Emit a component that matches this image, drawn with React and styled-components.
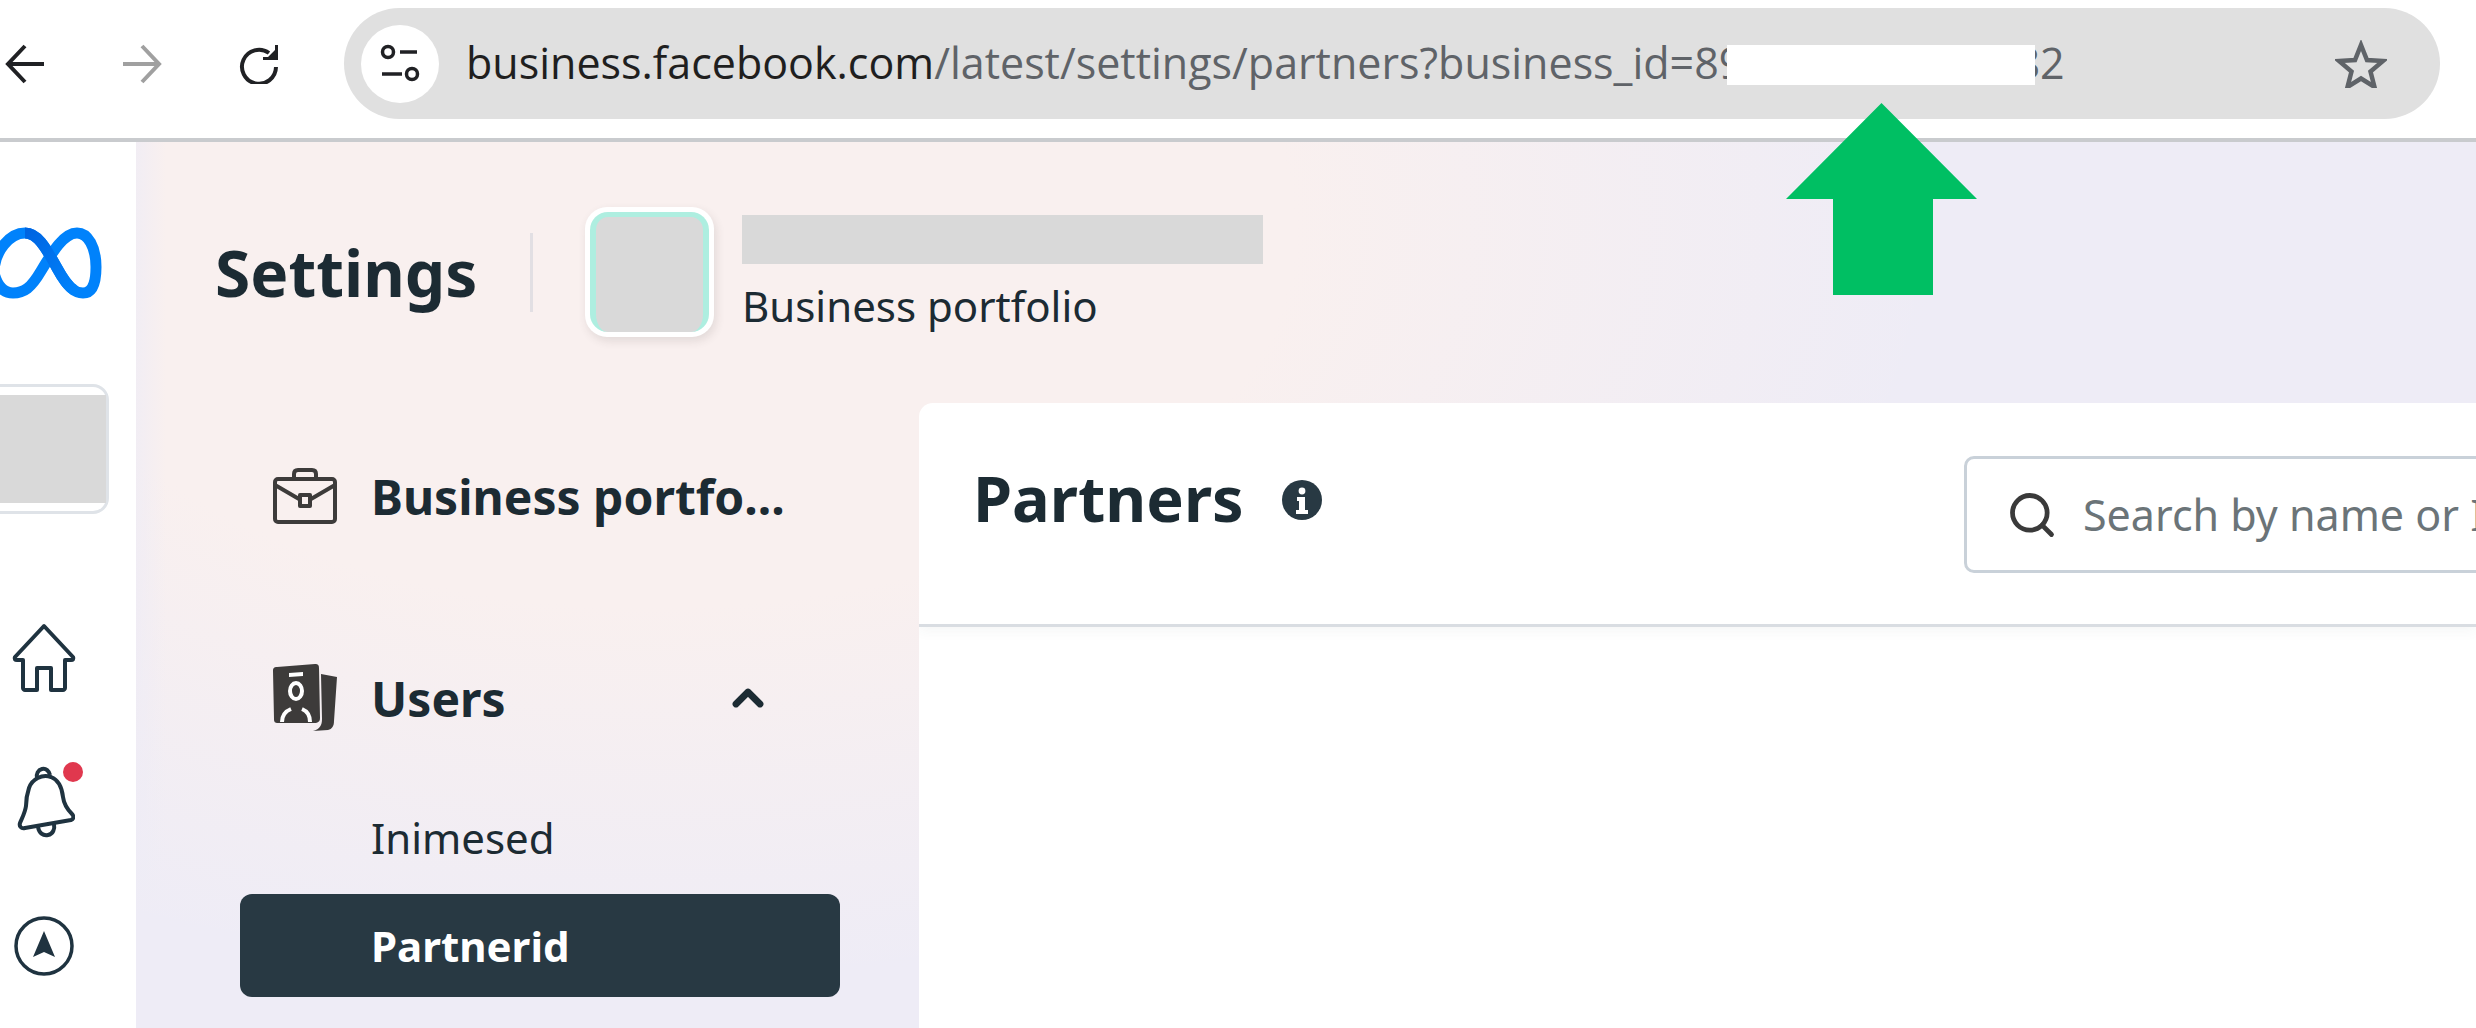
import React from "react";
import styled, { createGlobalStyle } from "styled-components";
import { ChevronUp, Search } from "lucide-react";

const GlobalStyle = createGlobalStyle`
  html, body {
    margin: 0;
    padding: 0;
    background: #fff;
  }
`;

const App = () => {
  return (
    <Page>
      <GlobalStyle />
      <Toolbar>
        <NavIcons>
          <svg width="40" height="40" viewBox="0 0 40 40" fill="none" stroke="#202124" strokeWidth="4">
            <path d="M39 20H4M20 2L3 20l17 18" />
          </svg>
          <svg width="40" height="40" viewBox="0 0 40 40" fill="none" stroke="#a0a0a0" strokeWidth="4">
            <path d="M1 20h35M20 2l17 18-17 18" />
          </svg>
          <svg width="40" height="40" viewBox="0 0 40 40" fill="none" stroke="#202124" strokeWidth="4">
            <path d="M30 9A17 17 0 1 0 37 23" />
            <path d="M39 1v15H24v-3h5L36 6V1z" fill="#202124" stroke="none" />
          </svg>
        </NavIcons>
        <Address>
          <SiteBadge>
            <svg width="42" height="40" viewBox="0 0 42 40" fill="none" stroke="#202124" strokeWidth="3.5">
              <circle cx="9" cy="8" r="5.5" />
              <path d="M21 8h17M3 30h20" />
              <circle cx="33" cy="30" r="5.5" />
            </svg>
          </SiteBadge>
          <Url>
            <strong>business.facebook.com</strong>/latest/settings/partners?business_id=89
            <UrlMask />
            82
          </Url>
          <StarSlot>
            <svg width="52" height="48" viewBox="0 0 52 48" fill="none" stroke="#5f6368" strokeWidth="4.5" strokeLinejoin="miter">
              <path d="M26 5l6 15 16 1-12.500 10.500L39.500 47 26 38.500 12.500 47l4-15.500L4 21l16-1z" />
            </svg>
          </StarSlot>
        </Address>
      </Toolbar>

      <Body>
        <Rail>
          <MetaLogo width="102" height="72" viewBox="0 0 102 72" fill="none" strokeWidth="11">
            <defs>
              <linearGradient id="metaA" x1="0" y1="0" x2="1" y2="1">
                <stop offset="0" stopColor="#0064e1" />
                <stop offset="1" stopColor="#0082fb" />
              </linearGradient>
            </defs>
            <path d="M-6 46C-6 24 10 6 25 6c12 0 20 13 32 35 11 20 18 25 26 25 10 0 13-11 13-26C96 20 88 6 77 6 64 6 53 24 41 44 31 61 24 66 13 66 3 66-3 58-6 46" stroke="#0082fb" />
            <path d="M25 6c12 0 20 13 32 35 7 13 12 19 17 22" stroke="url(#metaA)" />
          </MetaLogo>
          <ProfileBox>
            <ProfileFill />
          </ProfileBox>
          <RailSlot>
            <svg width="66" height="70" viewBox="0 0 66 70" fill="none" stroke="#1f3340" strokeWidth="4" strokeLinejoin="round">
              <path d="M33 3L4 34c-1 2 0 3 2 3h6v28c0 1 1 2 2 2h12V45h14v22h12c1 0 2-1 2-2V37h6c2 0 3-1 2-3z" />
            </svg>
          </RailSlot>
          <RailSlot>
            <BellWrap>
              <svg width="62" height="72" viewBox="0 0 62 72" fill="none" stroke="#1f3340" strokeWidth="4" strokeLinejoin="round">
                <path d="M24 12c-1-4 1-8 5-9s7 2 8 6" />
                <path d="M16 22c3-9 13-14 22-11 8 3 11 11 12 20 1 8 5 13 9 17 2 2 2 5-1 6L12 62c-4 1-6-2-5-5 2-5 5-10 6-17 0-6 1-12 3-18z" />
                <path d="M25 61c1 6 5 9 10 8s7-6 6-11" />
              </svg>
              <AlertDot />
            </BellWrap>
          </RailSlot>
          <RailSlot>
            <svg width="60" height="60" viewBox="0 0 60 60">
              <circle cx="30" cy="30" r="28" fill="none" stroke="#1f3340" strokeWidth="3.5" />
              <path d="M30 15L41 41 30 36 19 41z" fill="#1f3340" />
            </svg>
          </RailSlot>
        </Rail>

        <Content>
          <TopStrip>
            <PageTitle>Settings</PageTitle>
            <TitleDivider />
            <Avatar>
              <AvatarInner />
            </Avatar>
            <Portfolio>
              <NameMask />
              <PortfolioLabel>Business portfolio</PortfolioLabel>
            </Portfolio>
          </TopStrip>

          <Columns>
            <Sidebar>
              <NavRow>
                <NavIcon>
                  <svg width="64" height="56" viewBox="0 0 64 56" fill="none" stroke="#3d3b3a" strokeWidth="4" strokeLinejoin="round">
                    <path d="M21 11V6c0-2 1-4 4-4h14c3 0 4 2 4 4v5" />
                    <rect x="2" y="11" width="60" height="43" rx="3" />
                    <path d="M2 17l24 14M62 17L38 31" />
                    <rect x="27" y="27" width="10" height="11" />
                  </svg>
                </NavIcon>
                <NavLabel>Business portfo...</NavLabel>
              </NavRow>
              <NavRow $gap>
                <NavIcon>
                  <svg width="66" height="68" viewBox="0 0 66 68">
                    <path d="M48 10l16 3-3 44c0 5-2 8-6 9l-15 1c7-2 9-6 9-12z" fill="#3d3b3a" />
                    <path d="M4 3l38-3c3 0 4 1 4 4l1 50c0 3-1 4-4 5H5c-3 0-4-1-4-4L0 7c0-3 1-4 4-4z" fill="#3d3b3a" />
                    <path d="M16 9l14-1v4l-14 1z" fill="#fff" />
                    <ellipse cx="23" cy="27" rx="6" ry="8" fill="none" stroke="#fff" strokeWidth="4" />
                    <path d="M9 58c0-7 4-11 9-13M37 58c0-7-3-11-8-13" fill="none" stroke="#fff" strokeWidth="4" />
                  </svg>
                </NavIcon>
                <NavLabel>Users</NavLabel>
                <Chevron>
                  <ChevronUp size={48} strokeWidth={3.4} color="#1c2b33" />
                </Chevron>
              </NavRow>
              <SubList>
                <SubItem>Inimesed</SubItem>
                <SubItem $active>Partnerid</SubItem>
              </SubList>
            </Sidebar>

            <Card>
              <CardHeader>
                <CardTitle>
                  Partners
                  <svg width="40" height="40" viewBox="0 0 40 40">
                    <circle cx="20" cy="20" r="20" fill="#283943" />
                    <circle cx="20" cy="11" r="3.4" fill="#fff" />
                    <path d="M15 17h8v13h3v4H14v-4h3v-9h-2z" fill="#fff" />
                  </svg>
                </CardTitle>
                <SearchBox>
                  <Search size={52} strokeWidth={2.2} color="#3a3a3a" />
                  <SearchText>Search by name or ID</SearchText>
                </SearchBox>
              </CardHeader>
            </Card>
          </Columns>
        </Content>
      </Body>

      <CalloutArrow width="191" height="192" viewBox="0 0 191 192">
        <path d="M95.5 0L191 96h-44v96H47V96H0z" fill="#00bf63" />
      </CalloutArrow>
    </Page>
  );
};

export default App;

const Page = styled.div`
  position: relative;
  width: 2476px;
  height: 1028px;
  overflow: hidden;
  display: flex;
  flex-direction: column;
  background: #fff;
  font-family: "Open Sans", "Liberation Sans", sans-serif;
  color: #1c2b33;
`;

const Toolbar = styled.header`
  height: 142px;
  flex: none;
  box-sizing: border-box;
  display: flex;
  align-items: flex-start;
  padding: 8px 36px 0 5px;
  border-bottom: 4px solid #c9cbce;
  background: #fff;
`;

const NavIcons = styled.div`
  display: flex;
  align-items: center;
  gap: 77px;
  height: 111px;
  width: 339px;
  svg {
    flex: none;
  }
`;

const Address = styled.div`
  flex: 1;
  height: 111px;
  display: flex;
  align-items: center;
  padding: 0 53px 0 17px;
  border-radius: 56px;
  background: #e0e0e0;
`;

const SiteBadge = styled.div`
  width: 78px;
  height: 78px;
  flex: none;
  display: flex;
  align-items: center;
  justify-content: center;
  border-radius: 50%;
  background: #fff;
`;

const Url = styled.div`
  margin: -2px 0 0 27px;
  display: flex;
  align-items: center;
  font-family: "Open Sans", sans-serif;
  font-size: 43px;
  color: #5f6368;
  white-space: pre;
  strong {
    font-weight: 400;
    color: #1f1f1f;
  }
`;

const UrlMask = styled.span`
  display: inline-block;
  width: 308px;
  height: 40px;
  margin: 4px -20px 0 -16px;
  background: #fff;
  position: relative;
`;

const StarSlot = styled.div`
  margin-left: auto;
  display: flex;
`;

const Body = styled.div`
  flex: 1;
  min-height: 0;
  display: flex;
`;

const Rail = styled.nav`
  width: 136px;
  flex: none;
  display: flex;
  flex-direction: column;
  align-items: flex-start;
  overflow: hidden;
  background: #fff;
`;

const MetaLogo = styled.svg`
  margin-top: 85px;
  flex: none;
`;

const ProfileBox = styled.div`
  width: 150px;
  height: 130px;
  margin: 85px 0 0 -41px;
  flex: none;
  box-sizing: border-box;
  padding: 8px 0 8px 0;
  border: 3px solid #dfe3e8;
  border-radius: 16px;
  background: #fff;
`;

const ProfileFill = styled.div`
  height: 100%;
  background: #d9d9d9;
`;

const RailSlot = styled.div`
  width: 88px;
  height: 144px;
  flex: none;
  display: flex;
  align-items: center;
  justify-content: center;
  ${ProfileBox} + & {
    margin-top: 72px;
  }
`;

const BellWrap = styled.div`
  position: relative;
  display: flex;
`;

const AlertDot = styled.span`
  position: absolute;
  top: -4px;
  right: -8px;
  width: 20px;
  height: 20px;
  border-radius: 50%;
  background: #e0384e;
`;

const Content = styled.div`
  flex: 1;
  min-width: 0;
  display: flex;
  flex-direction: column;
  background:
    linear-gradient(90deg, rgba(238, 236, 246, 0.7) 0, rgba(238, 236, 246, 0) 30px),
    radial-gradient(ellipse 55% 85% at 22% 10%, #f9f0ef 0%, #f9f0ef 50%, rgba(249, 240, 239, 0) 100%),
    #eeecf6;
`;

const TopStrip = styled.div`
  height: 261px;
  flex: none;
  box-sizing: border-box;
  display: flex;
  align-items: center;
  padding: 0 0 1px 79px;
`;

const PageTitle = styled.h1`
  margin: 0;
  width: 315px;
  flex: none;
  font-family: "Noto Sans", sans-serif;
  font-size: 64px;
  font-weight: 700;
  color: #1c2b33;
`;

const TitleDivider = styled.div`
  width: 3px;
  height: 79px;
  flex: none;
  background: #e2dfe3;
`;

const Avatar = styled.div`
  width: 129px;
  height: 130px;
  margin-left: 52px;
  flex: none;
  box-sizing: border-box;
  padding: 5px;
  border-radius: 22px;
  background: #fff;
  box-shadow: 2px 4px 10px rgba(60, 50, 50, 0.12);
`;

const AvatarInner = styled.div`
  height: 100%;
  box-sizing: border-box;
  border-radius: 18px;
  border: solid #aeeee0;
  border-width: 5px 6px 0;
  background: #d9d9d9;
`;

const Portfolio = styled.div`
  margin: 5px 0 0 28px;
  display: flex;
  flex-direction: column;
`;

const NameMask = styled.div`
  width: 521px;
  height: 49px;
  background: #d9d9d9;
`;

const PortfolioLabel = styled.div`
  margin-top: 14px;
  font-family: "Noto Sans", sans-serif;
  font-size: 42px;
  line-height: 56px;
  color: #1c2b33;
`;

const Columns = styled.div`
  flex: 1;
  min-height: 0;
  display: flex;
`;

const Sidebar = styled.aside`
  width: 783px;
  flex: none;
  box-sizing: border-box;
  padding: 42px 79px 0 104px;
`;

const NavRow = styled.div`
  height: 102px;
  margin-top: ${(p) => (p.$gap ? "100px" : "0")};
  display: flex;
  align-items: center;
  padding-left: 33px;
`;

const NavIcon = styled.span`
  width: 98px;
  flex: none;
  display: flex;
`;

const NavLabel = styled.span`
  font-family: "Noto Sans", sans-serif;
  font-size: 48px;
  font-weight: 700;
  white-space: nowrap;
  color: #1c2b33;
`;

const Chevron = styled.span`
  margin-left: auto;
  margin-right: 68px;
  display: flex;
`;

const SubList = styled.div`
  margin-top: 37px;
  display: flex;
  flex-direction: column;
  gap: 5px;
`;

const SubItem = styled.div`
  height: 103px;
  display: flex;
  align-items: center;
  padding-left: 131px;
  border-radius: 12px;
  font-family: "Noto Sans", sans-serif;
  font-size: 42px;
  font-weight: ${(p) => (p.$active ? 700 : 400)};
  color: ${(p) => (p.$active ? "#fff" : "#1c2b33")};
  background: ${(p) => (p.$active ? "#283943" : "transparent")};
`;

const Card = styled.main`
  flex: 1;
  min-width: 0;
  overflow: hidden;
  border-top-left-radius: 14px;
  background: #fff;
`;

const CardHeader = styled.div`
  height: 224px;
  box-sizing: border-box;
  display: flex;
  align-items: flex-start;
  padding: 53px 0 0 54px;
  border-bottom: 3px solid #d9dde2;
  box-shadow: 0 4px 12px rgba(60, 70, 80, 0.05);
`;

const CardTitle = styled.h2`
  width: 991px;
  height: 82px;
  margin: 0;
  flex: none;
  display: flex;
  align-items: center;
  gap: 38px;
  font-family: "Noto Sans", sans-serif;
  font-size: 63px;
  font-weight: 700;
  color: #1c2b33;
  svg {
    margin-top: 6px;
  }
`;

const SearchBox = styled.div`
  flex: 1;
  height: 117px;
  margin-right: -60px;
  box-sizing: border-box;
  display: flex;
  align-items: center;
  gap: 25px;
  padding-left: 39px;
  border: 3px solid #c9d1d9;
  border-radius: 10px;
  overflow: hidden;
  svg {
    flex: none;
  }
`;

const SearchText = styled.span`
  font-family: "Noto Sans", sans-serif;
  font-size: 43px;
  white-space: nowrap;
  color: #6b7478;
`;

const CalloutArrow = styled.svg`
  position: absolute;
  left: 1786px;
  top: 103px;
`;
